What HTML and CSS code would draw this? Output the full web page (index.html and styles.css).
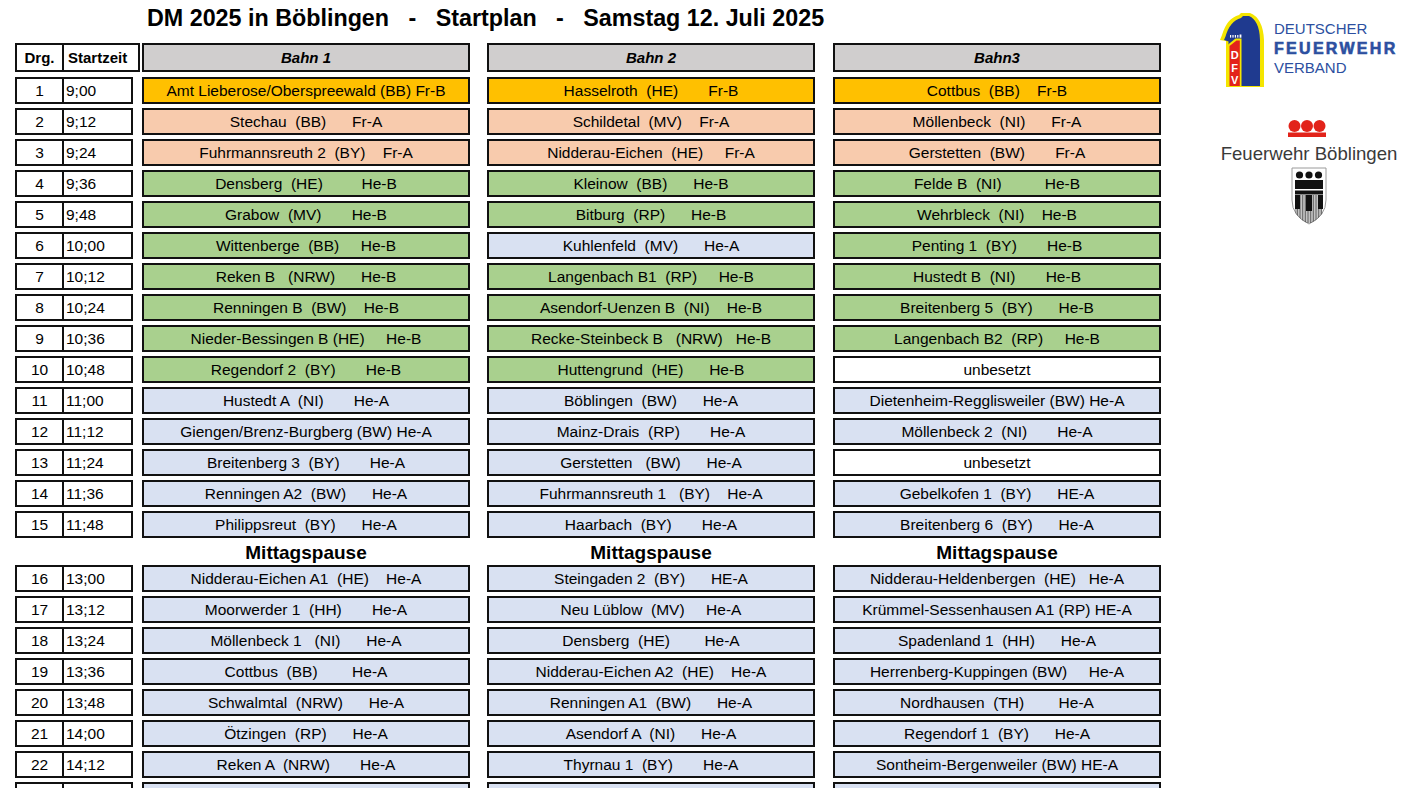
FILE: index.html
```html
<!DOCTYPE html>
<html lang="de">
<head>
<meta charset="utf-8">
<title>DM 2025 Startplan</title>
<link rel="stylesheet" href="styles.css">
</head>
<body>
<div class="page">
  <div class="main">
    <h1 class="title">DM 2025 in Böblingen   -   Startplan   -   Samstag 12. Juli 2025</h1>

    <div class="row head">
      <div class="lead-wrap"><div class="lead"><span class="num">Drg.</span><span class="time">Startzeit</span></div></div>
      <div class="cell hd">Bahn 1</div>
      <div class="cell hd b2">Bahn 2</div>
      <div class="cell hd b3">Bahn3</div>
    </div>

    <div class="row"><div class="lead-wrap"><div class="lead"><span class="num">1</span><span class="time">9;00</span></div></div>
      <div class="cell o">Amt Lieberose/Oberspreewald (BB) Fr-B</div>
      <div class="cell o b2">Hasselroth  (HE)       Fr-B</div>
      <div class="cell o b3">Cottbus  (BB)    Fr-B</div></div>
    <div class="row"><div class="lead-wrap"><div class="lead"><span class="num">2</span><span class="time">9;12</span></div></div>
      <div class="cell p">Stechau  (BB)      Fr-A</div>
      <div class="cell p b2">Schildetal  (MV)    Fr-A</div>
      <div class="cell p b3">Möllenbeck  (NI)      Fr-A</div></div>
    <div class="row"><div class="lead-wrap"><div class="lead"><span class="num">3</span><span class="time">9;24</span></div></div>
      <div class="cell p">Fuhrmannsreuth 2  (BY)    Fr-A</div>
      <div class="cell p b2">Nidderau-Eichen  (HE)     Fr-A</div>
      <div class="cell p b3">Gerstetten  (BW)       Fr-A</div></div>
    <div class="row"><div class="lead-wrap"><div class="lead"><span class="num">4</span><span class="time">9;36</span></div></div>
      <div class="cell g">Densberg  (HE)         He-B</div>
      <div class="cell g b2">Kleinow  (BB)      He-B</div>
      <div class="cell g b3">Felde B  (NI)          He-B</div></div>
    <div class="row"><div class="lead-wrap"><div class="lead"><span class="num">5</span><span class="time">9;48</span></div></div>
      <div class="cell g">Grabow  (MV)       He-B</div>
      <div class="cell g b2">Bitburg  (RP)      He-B</div>
      <div class="cell g b3">Wehrbleck  (NI)    He-B</div></div>
    <div class="row"><div class="lead-wrap"><div class="lead"><span class="num">6</span><span class="time">10;00</span></div></div>
      <div class="cell g">Wittenberge  (BB)     He-B</div>
      <div class="cell b b2">Kuhlenfeld  (MV)      He-A</div>
      <div class="cell g b3">Penting 1  (BY)       He-B</div></div>
    <div class="row"><div class="lead-wrap"><div class="lead"><span class="num">7</span><span class="time">10;12</span></div></div>
      <div class="cell g">Reken B   (NRW)      He-B</div>
      <div class="cell g b2">Langenbach B1  (RP)     He-B</div>
      <div class="cell g b3">Hustedt B  (NI)       He-B</div></div>
    <div class="row"><div class="lead-wrap"><div class="lead"><span class="num">8</span><span class="time">10;24</span></div></div>
      <div class="cell g">Renningen B  (BW)    He-B</div>
      <div class="cell g b2">Asendorf-Uenzen B  (NI)    He-B</div>
      <div class="cell g b3">Breitenberg 5  (BY)      He-B</div></div>
    <div class="row"><div class="lead-wrap"><div class="lead"><span class="num">9</span><span class="time">10;36</span></div></div>
      <div class="cell g">Nieder-Bessingen B (HE)     He-B</div>
      <div class="cell g b2">Recke-Steinbeck B   (NRW)   He-B</div>
      <div class="cell g b3">Langenbach B2  (RP)     He-B</div></div>
    <div class="row"><div class="lead-wrap"><div class="lead"><span class="num">10</span><span class="time">10;48</span></div></div>
      <div class="cell g">Regendorf 2  (BY)       He-B</div>
      <div class="cell g b2">Huttengrund  (HE)      He-B</div>
      <div class="cell w b3">unbesetzt</div></div>
    <div class="row"><div class="lead-wrap"><div class="lead"><span class="num">11</span><span class="time">11;00</span></div></div>
      <div class="cell b">Hustedt A  (NI)       He-A</div>
      <div class="cell b b2">Böblingen  (BW)      He-A</div>
      <div class="cell b b3">Dietenheim-Regglisweiler (BW) He-A</div></div>
    <div class="row"><div class="lead-wrap"><div class="lead"><span class="num">12</span><span class="time">11;12</span></div></div>
      <div class="cell b">Giengen/Brenz-Burgberg (BW) He-A</div>
      <div class="cell b b2">Mainz-Drais  (RP)       He-A</div>
      <div class="cell b b3">Möllenbeck 2  (NI)       He-A</div></div>
    <div class="row"><div class="lead-wrap"><div class="lead"><span class="num">13</span><span class="time">11;24</span></div></div>
      <div class="cell b">Breitenberg 3  (BY)       He-A</div>
      <div class="cell b b2">Gerstetten   (BW)      He-A</div>
      <div class="cell w b3">unbesetzt</div></div>
    <div class="row"><div class="lead-wrap"><div class="lead"><span class="num">14</span><span class="time">11;36</span></div></div>
      <div class="cell b">Renningen A2  (BW)      He-A</div>
      <div class="cell b b2">Fuhrmannsreuth 1   (BY)    He-A</div>
      <div class="cell b b3">Gebelkofen 1  (BY)      HE-A</div></div>
    <div class="row"><div class="lead-wrap"><div class="lead"><span class="num">15</span><span class="time">11;48</span></div></div>
      <div class="cell b">Philippsreut  (BY)      He-A</div>
      <div class="cell b b2">Haarbach  (BY)       He-A</div>
      <div class="cell b b3">Breitenberg 6  (BY)      He-A</div></div>

    <div class="pause">
      <div class="lead-wrap"></div>
      <div class="pcell">Mittagspause</div>
      <div class="pcell b2">Mittagspause</div>
      <div class="pcell b3">Mittagspause</div>
    </div>

    <div class="row"><div class="lead-wrap"><div class="lead"><span class="num">16</span><span class="time">13;00</span></div></div>
      <div class="cell b">Nidderau-Eichen A1  (HE)    He-A</div>
      <div class="cell b b2">Steingaden 2  (BY)      HE-A</div>
      <div class="cell b b3">Nidderau-Heldenbergen  (HE)   He-A</div></div>
    <div class="row"><div class="lead-wrap"><div class="lead"><span class="num">17</span><span class="time">13;12</span></div></div>
      <div class="cell b">Moorwerder 1  (HH)       He-A</div>
      <div class="cell b b2">Neu Lüblow  (MV)     He-A</div>
      <div class="cell b b3">Krümmel-Sessenhausen A1 (RP) HE-A</div></div>
    <div class="row"><div class="lead-wrap"><div class="lead"><span class="num">18</span><span class="time">13;24</span></div></div>
      <div class="cell b">Möllenbeck 1   (NI)      He-A</div>
      <div class="cell b b2">Densberg  (HE)        He-A</div>
      <div class="cell b b3">Spadenland 1  (HH)      He-A</div></div>
    <div class="row"><div class="lead-wrap"><div class="lead"><span class="num">19</span><span class="time">13;36</span></div></div>
      <div class="cell b">Cottbus  (BB)        He-A</div>
      <div class="cell b b2">Nidderau-Eichen A2  (HE)    He-A</div>
      <div class="cell b b3">Herrenberg-Kuppingen (BW)     He-A</div></div>
    <div class="row"><div class="lead-wrap"><div class="lead"><span class="num">20</span><span class="time">13;48</span></div></div>
      <div class="cell b">Schwalmtal  (NRW)      He-A</div>
      <div class="cell b b2">Renningen A1  (BW)      He-A</div>
      <div class="cell b b3">Nordhausen  (TH)        He-A</div></div>
    <div class="row"><div class="lead-wrap"><div class="lead"><span class="num">21</span><span class="time">14;00</span></div></div>
      <div class="cell b">Ötzingen  (RP)      He-A</div>
      <div class="cell b b2">Asendorf A  (NI)      He-A</div>
      <div class="cell b b3">Regendorf 1  (BY)      He-A</div></div>
    <div class="row"><div class="lead-wrap"><div class="lead"><span class="num">22</span><span class="time">14;12</span></div></div>
      <div class="cell b">Reken A  (NRW)       He-A</div>
      <div class="cell b b2">Thyrnau 1  (BY)       He-A</div>
      <div class="cell b b3">Sontheim-Bergenweiler (BW) HE-A</div></div>
    <div class="row"><div class="lead-wrap"><div class="lead"><span class="num"></span><span class="time"></span></div></div>
      <div class="cell b"></div>
      <div class="cell b b2"></div>
      <div class="cell b b3"></div></div>
  </div>

  <aside class="logos">
    <div class="dfv">
      <svg class="helmet" width="50" height="78" viewBox="0 0 50 78" aria-hidden="true">
        <path d="M10,77 L10,31 L4,30 L6,25 Q11,8 23,5 L25,3 L34,3 Q47,8 48,30 L48,77 Z" fill="#f4e500"/>
        <path d="M12.5,76 L12.5,31.5 L8,30 L9.5,26.5 Q14,11 25,8 L27,6 L33,6 Q43.5,10.5 44,30 L44,76 Z" fill="#1f3a8f"/>
        <path d="M11.5,77 L11.5,35 L19.5,28.5 L25.5,28.5 L25.5,77 Z" fill="#f4e500"/>
        <path d="M13.5,76 L13.5,36 L20.5,30.5 L23.8,30.5 L23.8,76 Z" fill="#e3231b"/>
        <rect x="14" y="25" width="1.2" height="2.6" fill="#fff"/>
        <rect x="16.4" y="25" width="1.2" height="2.6" fill="#fff"/>
        <rect x="18.8" y="25" width="1.2" height="2.6" fill="#fff"/>
        <rect x="21.2" y="25" width="1.2" height="2.6" fill="#fff"/>
        <rect x="23.6" y="24.5" width="1.8" height="3.2" fill="#fff"/>
        <text x="18.7" y="49" class="dfvl">D</text>
        <text x="18.7" y="61.5" class="dfvl">F</text>
        <text x="18.7" y="73.5" class="dfvl">V</text>
      </svg>
      <div class="dfv-text">
        <span class="d1">DEUTSCHER</span>
        <span class="d2">FEUERWEHR</span>
        <span class="d3">VERBAND</span>
      </div>
    </div>

    <div class="fwb">
      <svg class="dots" width="38" height="18" viewBox="0 0 38 18" aria-hidden="true">
        <circle cx="6.5" cy="6" r="6" fill="#e2231a"/>
        <circle cx="19" cy="6" r="6" fill="#e2231a"/>
        <circle cx="31.5" cy="6" r="6" fill="#e2231a"/>
        <rect x="0" y="12.5" width="38" height="4.5" fill="#e2231a"/>
      </svg>
      <div class="fwb-name">Feuerwehr Böblingen</div>
      <svg class="shield" width="38" height="58" viewBox="0 0 38 58" aria-hidden="true">
        <defs>
          <clipPath id="sh"><path d="M2,1 H36 V33 Q36,49 19,57 Q2,49 2,33 Z"/></clipPath>
        </defs>
        <path d="M2,1 H36 V33 Q36,49 19,57 Q2,49 2,33 Z" fill="#fff" stroke="#9a9a9a" stroke-width="1"/>
        <g clip-path="url(#sh)">
          <circle cx="9.5" cy="8" r="3.6" fill="#111"/>
          <circle cx="19" cy="8" r="3.6" fill="#111"/>
          <circle cx="28.5" cy="8" r="3.6" fill="#111"/>
          <rect x="5" y="13" width="28" height="9" fill="#111"/>
          <rect x="5" y="23.5" width="28" height="4" fill="#111"/>
          <g stroke="#222" stroke-width="0.7">
            <line x1="6" y1="28" x2="6" y2="56"/><line x1="7.6" y1="28" x2="7.6" y2="56"/>
            <line x1="9.2" y1="28" x2="9.2" y2="56"/><line x1="10.8" y1="28" x2="10.8" y2="56"/>
            <line x1="12.4" y1="28" x2="12.4" y2="56"/><line x1="14" y1="28" x2="14" y2="56"/>
            <line x1="15.6" y1="28" x2="15.6" y2="56"/><line x1="17.2" y1="28" x2="17.2" y2="56"/>
            <line x1="18.8" y1="28" x2="18.8" y2="56"/><line x1="20.4" y1="28" x2="20.4" y2="56"/>
            <line x1="22" y1="28" x2="22" y2="56"/><line x1="23.6" y1="28" x2="23.6" y2="56"/>
            <line x1="25.2" y1="28" x2="25.2" y2="56"/><line x1="26.8" y1="28" x2="26.8" y2="56"/>
            <line x1="28.4" y1="28" x2="28.4" y2="56"/><line x1="30" y1="28" x2="30" y2="56"/>
            <line x1="31.6" y1="28" x2="31.6" y2="56"/>
          </g>
          <rect x="5" y="28" width="5" height="14" fill="#111"/>
          <rect x="16" y="28" width="6" height="16" fill="#111"/>
          <rect x="28" y="28" width="5" height="14" fill="#111"/>
        </g>
      </svg>
    </div>
  </aside>
</div>
</body>
</html>
```

FILE: styles.css
```css
body {
  margin: 0;
  background: #fff;
  color: #000;
  font-family: "Liberation Sans", Arial, sans-serif;
}

.page {
  display: flex;
  padding-left: 15px;
}

.main {
  width: 1146px;
  flex: none;
}

.title {
  margin: 0;
  height: 43px;
  padding-left: 132px;
  font-size: 23.3px;
  font-weight: 700;
  line-height: 36px;
  white-space: pre;
}

.row {
  display: flex;
  height: 27px;
  margin-bottom: 4px;
}

.row.head {
  height: 29px;
  margin-bottom: 5px;
}

.lead-wrap {
  width: 127px;
  flex: none;
}

.lead {
  display: flex;
  width: 118px;
  height: 100%;
  box-sizing: border-box;
  border: 2px solid #111;
  background: #fff;
  font-size: 15.5px;
  line-height: 23px;
}

.head .lead {
  width: 125px;
  font-weight: 700;
  font-size: 15px;
  line-height: 25px;
}

.num {
  width: 45px;
  flex: none;
  text-align: center;
  border-right: 2px solid #111;
}

.time {
  padding-left: 2px;
}

.head .time {
  padding-left: 4px;
}

.cell {
  width: 328px;
  flex: none;
  box-sizing: border-box;
  border: 2px solid #111;
  text-align: center;
  font-size: 15.5px;
  line-height: 23px;
  white-space: pre;
  overflow: hidden;
}

.cell.b2 { margin-left: 17px; }
.cell.b3 { margin-left: 18px; }

.cell.hd {
  background: #d0cece;
  font-weight: 700;
  font-style: italic;
  font-size: 15px;
  line-height: 25px;
}

.o { background: #ffc000; }
.p { background: #f8cbad; }
.g { background: #a9d08e; }
.b { background: #d9e1f2; }
.w { background: #fff; }

.pause {
  display: flex;
  height: 23px;
}

.pcell {
  width: 328px;
  flex: none;
  text-align: center;
  font-size: 19px;
  font-weight: 700;
  line-height: 22px;
}

.pcell.b2 { margin-left: 17px; }
.pcell.b3 { margin-left: 18px; }

.logos {
  margin-left: 55px;
  width: 186px;
  flex: none;
  display: flex;
  flex-direction: column;
}

.dfv {
  display: flex;
  align-items: flex-start;
  margin-top: 10px;
}

.helmet {
  display: block;
  flex: none;
}

.dfvl {
  fill: #fff;
  font-family: "Liberation Sans", Arial, sans-serif;
  font-weight: 700;
  font-size: 11px;
  text-anchor: middle;
}

.dfv-text {
  display: flex;
  flex-direction: column;
  margin-left: 8px;
  margin-top: 9px;
  color: #2c4fa0;
  line-height: 19.5px;
}

.d1 {
  font-size: 15px;
}

.d2 {
  font-size: 16px;
  font-weight: 700;
  letter-spacing: 2.3px;
  -webkit-text-stroke: 0.6px #2c4fa0;
}

.d3 {
  font-size: 15px;
}

.fwb {
  display: flex;
  flex-direction: column;
  align-items: center;
  margin-top: 32px;
}

.dots {
  display: block;
  margin-left: -4px;
}

.fwb-name {
  margin-top: 5px;
  font-size: 18.6px;
  color: #3a3a3a;
  line-height: 22px;
  white-space: nowrap;
}

.shield {
  display: block;
  margin-top: 2px;
}
```
